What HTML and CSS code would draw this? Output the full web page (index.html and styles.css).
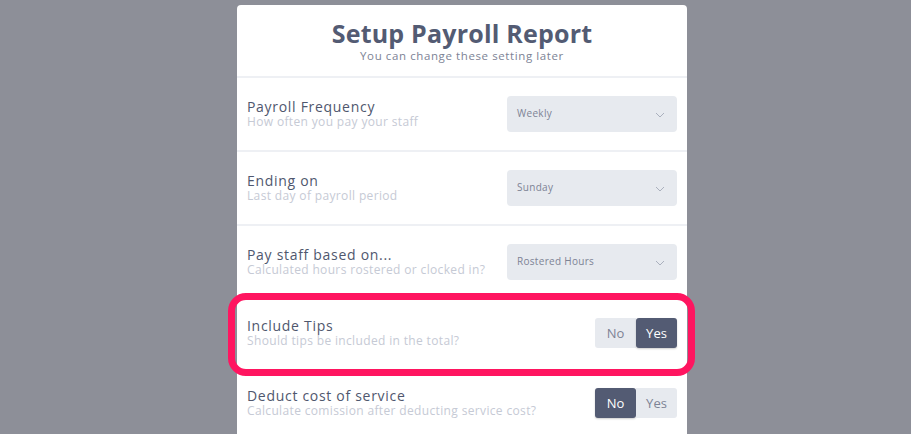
FILE: index.html
```html
<!DOCTYPE html>
<html lang="en">
<head>
    <meta charset="UTF-8">
    <meta name="viewport" content="width=device-width, initial-scale=1.0">
    <title>Setup Payroll Report</title>
    <link rel="stylesheet" href="styles.css">
</head>
<body>
    <div class="card">
        <header class="card-header">
            <h1>Setup Payroll Report</h1>
            <p>You can change these setting later</p>
        </header>

        <div class="row">
            <div class="label">
                <div class="label-title">Payroll Frequency</div>
                <div class="label-sub">How often you pay your staff</div>
            </div>
            <div class="select">
                <span>Weekly</span>
                <svg class="chevron" width="10" height="6" viewBox="0 0 10 6"><path d="M1 1 L5 5 L9 1" fill="none" stroke="#aab0bd" stroke-width="1"/></svg>
            </div>
        </div>

        <div class="row">
            <div class="label">
                <div class="label-title">Ending on</div>
                <div class="label-sub">Last day of payroll period</div>
            </div>
            <div class="select">
                <span>Sunday</span>
                <svg class="chevron" width="10" height="6" viewBox="0 0 10 6"><path d="M1 1 L5 5 L9 1" fill="none" stroke="#aab0bd" stroke-width="1"/></svg>
            </div>
        </div>

        <div class="row">
            <div class="label">
                <div class="label-title">Pay staff based on...</div>
                <div class="label-sub">Calculated hours rostered or clocked in?</div>
            </div>
            <div class="select">
                <span>Rostered Hours</span>
                <svg class="chevron" width="10" height="6" viewBox="0 0 10 6"><path d="M1 1 L5 5 L9 1" fill="none" stroke="#aab0bd" stroke-width="1"/></svg>
            </div>
        </div>

        <div class="row row-toggle">
            <span class="highlight"></span>
            <div class="label">
                <div class="label-title">Include Tips</div>
                <div class="label-sub">Should tips be included in the total?</div>
            </div>
            <div class="toggle">
                <button type="button" class="toggle-btn">No</button>
                <button type="button" class="toggle-btn active">Yes</button>
            </div>
        </div>

        <div class="row row-toggle">
            <div class="label">
                <div class="label-title">Deduct cost of service</div>
                <div class="label-sub">Calculate comission after deducting service cost?</div>
            </div>
            <div class="toggle">
                <button type="button" class="toggle-btn active">No</button>
                <button type="button" class="toggle-btn">Yes</button>
            </div>
        </div>
    </div>
</body>
</html>
```

FILE: styles.css
```css
body {
    font-family: "Open Sans", "DejaVu Sans", sans-serif;
    background-color: #8d8f98;
    margin: 0;
    padding: 0;
    height: 434px;
    overflow: hidden;
}

.card {
    background-color: #ffffff;
    width: 450px;
    min-height: 440px;
    margin: 5px 0 0 237px;
    border-radius: 4px 4px 0 0;
}

.card-header {
    height: 73px;
    border-bottom: 2px solid #eef0f4;
    text-align: center;
    box-sizing: border-box;
    padding-top: 13px;
}

.card-header h1 {
    margin: 0;
    font-size: 25px;
    line-height: 30px;
    font-weight: 700;
    letter-spacing: 0.2px;
    color: #535b73;
}

.card-header p {
    margin: 0;
    font-size: 11.5px;
    line-height: 15px;
    letter-spacing: 0.6px;
    color: #7d8395;
}

.row {
    position: relative;
    height: 74px;
    box-sizing: border-box;
    padding: 0 10px;
    display: flex;
    align-items: center;
    justify-content: space-between;
    border-bottom: 2px solid #eef0f4;
}

.row-toggle {
    height: 66px;
    border-bottom: none;
}

.row-toggle + .row-toggle {
    height: 70px;
    padding-top: 4px;
}

.label {
    margin-top: -2px;
}

.label-title {
    font-size: 14px;
    line-height: 17px;
    font-weight: 500;
    letter-spacing: 0.7px;
    color: #4f576e;
}

.label-sub {
    font-size: 12px;
    line-height: 14px;
    letter-spacing: 0.35px;
    color: #c6cad5;
}

.select {
    width: 170px;
    height: 36px;
    box-sizing: border-box;
    background-color: #e7eaef;
    border-radius: 4px;
    padding: 0 12px 0 10px;
    display: flex;
    justify-content: space-between;
    font-size: 10px;
    letter-spacing: 0.3px;
    color: #7d8395;
}

.select span {
    margin-top: 10px;
}

.chevron {
    margin-top: 16px;
}

.toggle {
    display: flex;
}

.toggle-btn {
    width: 41px;
    height: 30px;
    border: none;
    padding: 0;
    font-family: inherit;
    font-size: 13px;
    color: #7d8395;
    background-color: #e7eaef;
    cursor: pointer;
}

.toggle-btn:first-child {
    border-radius: 3px 0 0 3px;
}

.toggle-btn:last-child {
    border-radius: 0 3px 3px 0;
}

.toggle-btn.active {
    background-color: #535b73;
    color: #ffffff;
    border-radius: 3px;
    box-shadow: 0 1px 2px rgba(0, 0, 0, 0.2);
}

.highlight {
    position: absolute;
    top: -7px;
    left: -9px;
    width: 467px;
    height: 83px;
    box-sizing: border-box;
    border: 7px solid #ff1560;
    border-radius: 18px;
    pointer-events: none;
}
```
